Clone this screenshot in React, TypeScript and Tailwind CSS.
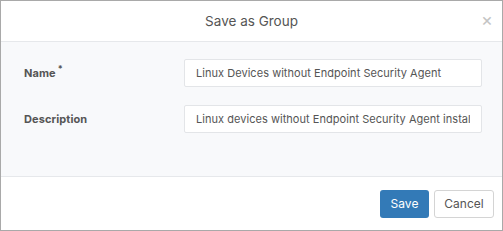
export default function App() {
  return (
    <div
      className="w-[503px] h-[231px] flex flex-col border border-[#a9a9a9] bg-white text-[#555]"
      style={{ fontFamily: 'Inter, "Noto Sans", sans-serif' }}
    >
      <div className="relative h-[41px] shrink-0 flex items-center justify-center border-b border-[#e6e8eb]">
        <h2 className="text-[13.5px] text-[#555]">Save as Group</h2>
        <button className="absolute right-[9px] top-[10px] text-[#c4c4c4] text-[18px] leading-none">×</button>
      </div>

      <div className="h-[134px] shrink-0 bg-[#f8f9fb] pt-[17px] pl-[23px] pr-[20px] flex flex-col gap-[18px]">
        <div className="flex items-center">
          <label className="w-[160px] text-[11px] font-bold text-[#555] tracking-[0.1px]">
            Name<sup className="ml-[2px] text-[9px]">*</sup>
          </label>
          <input
            readOnly
            value="Linux Devices without Endpoint Security Agent"
            className="flex-1 h-[28px] px-[11px] bg-white border border-[#e3e5e8] rounded-[2px] text-[11px] tracking-[0.04px] text-[#555] outline-none"
          />
        </div>
        <div className="flex items-center">
          <label className="w-[160px] text-[11px] font-bold text-[#555] tracking-[0.1px]">Description</label>
          <input
            readOnly
            value="Linux devices without Endpoint Security Agent installed"
            className="flex-1 h-[28px] px-[11px] bg-white border border-[#e3e5e8] rounded-[2px] text-[11px] tracking-[0.04px] text-[#555] outline-none"
          />
        </div>
      </div>

      <div className="flex-1 border-t border-[#e6e8eb] flex justify-end items-start gap-[5px] pt-[13px] pr-[8px]">
        <button className="w-[49px] h-[28px] rounded-[3px] bg-[#337ab7] text-white text-[12px]">Save</button>
        <button className="w-[60px] h-[28px] rounded-[3px] bg-white border border-[#d4d4d4] text-[#555] text-[12px]">
          Cancel
        </button>
      </div>
    </div>
  )
}
